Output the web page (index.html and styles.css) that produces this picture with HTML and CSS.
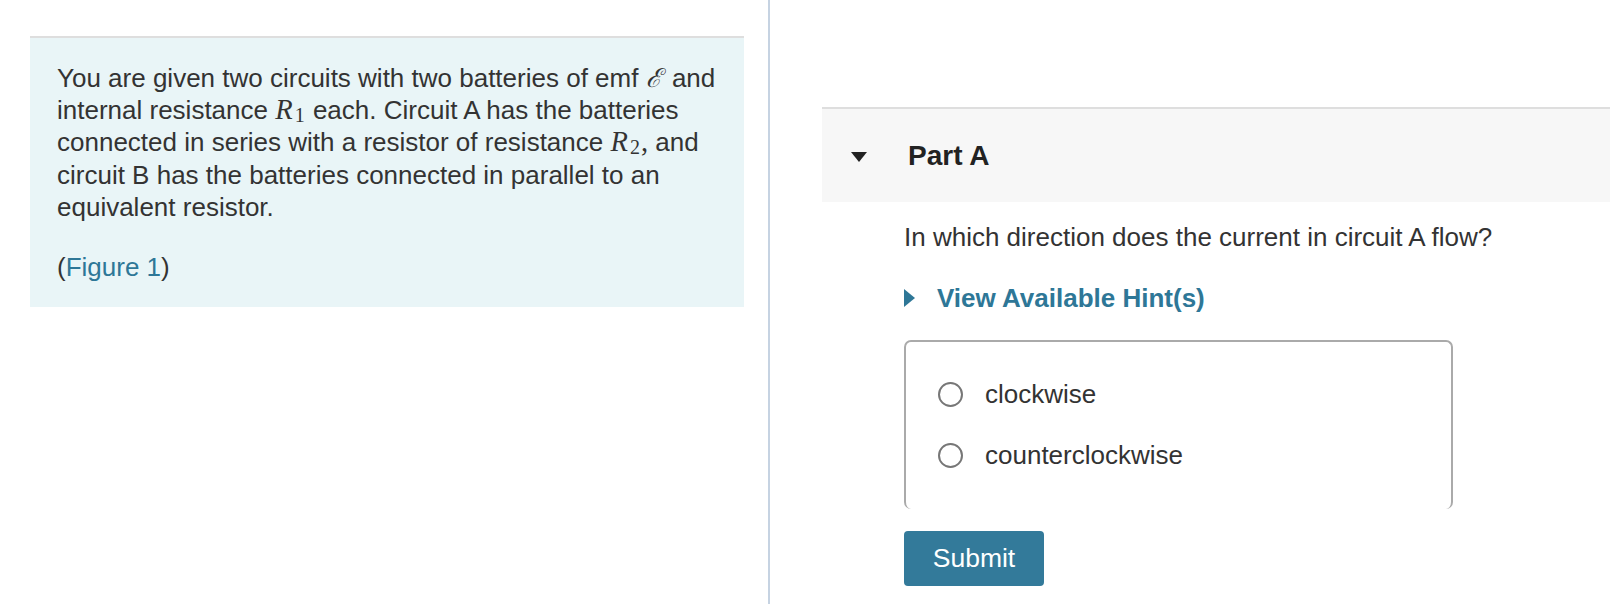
FILE: index.html
```html
<!DOCTYPE html>
<html>
<head>
<meta charset="utf-8">
<link rel="stylesheet" href="styles.css">
</head>
<body>
<div class="page">
  <div class="left-col">
    <div class="intro">
      <p>You are given two circuits with two batteries of emf <span class="math script">ℰ</span> and internal resistance <span class="math"><i>R</i><span class="sub">1</span></span> each. Circuit A has the batteries connected in series with a resistor of resistance <span class="math"><i>R</i><span class="sub">2</span>,</span> and circuit B has the batteries connected in parallel to an equivalent resistor.</p>
      <p>(<a class="link" href="#">Figure 1</a>)</p>
    </div>
  </div>
  <div class="right-col">
    <div class="part">
      <div class="part-head">
        <span class="caret-down"></span>
        <span class="part-title">Part A</span>
      </div>
      <div class="part-body">
        <p class="question">In which direction does the current in circuit A flow?</p>
        <div class="hint">
          <span class="caret-right"></span>
          <span class="hint-text">View Available Hint(s)</span>
        </div>
        <div class="choices">
          <label class="choice"><span class="radio"></span><span>clockwise</span></label>
          <label class="choice"><span class="radio"></span><span>counterclockwise</span></label>
        </div>
        <button class="submit">Submit</button>
      </div>
    </div>
  </div>
</div>
</body>
</html>
```
FILE: styles.css
```css
html, body {
  margin: 0;
  padding: 0;
  background: #fff;
}
body {
  font-family: "Liberation Sans", Arial, Helvetica, sans-serif;
  color: #333;
  font-size: 26px;
  line-height: 33.5px;
}
.page {
  display: flex;
  min-height: 604px;
}
.left-col {
  width: 770px;
  flex: none;
  border-right: 2px solid #c6d3e2;
  padding: 36px 0 0 30px;
  box-sizing: border-box;
}
.intro {
  width: 714px;
  box-sizing: border-box;
  background: #e9f5f7;
  border-top: 2px solid #dedede;
  padding: 24px 16px 24px 27px;
  line-height: 32.2px;
}
.intro p {
  margin: 0 0 27.8px 0;
}
.intro p:last-child {
  margin-bottom: 0;
}
.math {
  font-family: "Liberation Serif", "DejaVu Serif", serif;
  font-size: 28.5px;
  line-height: 20px;
}
.math i {
  font-style: italic;
  margin-right: 2px;
}
.math .sub {
  font-size: 20px;
  position: relative;
  top: 3px;
  margin-right: 1px;
}
.script {
  font-family: "Liberation Serif", "DejaVu Serif", serif;
  font-style: italic;
  font-size: 26px;
  margin-right: 3px;
}
.link {
  color: #2e7797;
  text-decoration: none;
}
.right-col {
  flex: 1;
  padding: 107px 0 0 52px;
}
.part-head {
  border-top: 2px solid #dedede;
  background: #f7f7f7;
  height: 93px;
  display: flex;
  align-items: center;
  padding-left: 29px;
}
.caret-down {
  width: 0;
  height: 0;
  border-left: 8px solid transparent;
  border-right: 8px solid transparent;
  border-top: 10px solid #222;
  margin-right: 41px;
  margin-top: 2px;
}
.part-title {
  font-weight: bold;
  font-size: 28px;
  color: #222;
}
.part-body {
  padding: 19px 0 0 82px;
}
.question {
  margin: 0;
}
.hint {
  display: flex;
  align-items: center;
  margin-top: 27px;
  color: #2e7797;
  font-weight: bold;
}
.caret-right {
  width: 0;
  height: 0;
  border-top: 9px solid transparent;
  border-bottom: 9px solid transparent;
  border-left: 11px solid #2e7797;
  margin: 0 22px 0 0;
}
.choices {
  margin-top: 25px;
  width: 549px;
  height: 169px;
  box-sizing: border-box;
  border: 2px solid #aaa;
  border-bottom: 0;
  border-radius: 7px;
  padding: 36px 0 0 32px;
}
.choice {
  display: flex;
  align-items: center;
  height: 33.5px;
  margin-bottom: 27.5px;
}
.radio {
  width: 21px;
  height: 21px;
  border: 2px solid #777;
  border-radius: 50%;
  margin-right: 22px;
  flex: none;
}
.submit {
  display: block;
  margin-top: 22px;
  width: 140px;
  height: 55px;
  border: 0;
  border-radius: 4px;
  background: #337a9a;
  color: #fff;
  font-family: "Liberation Sans", Arial, Helvetica, sans-serif;
  font-size: 26.5px;
  padding: 0;
}
```
